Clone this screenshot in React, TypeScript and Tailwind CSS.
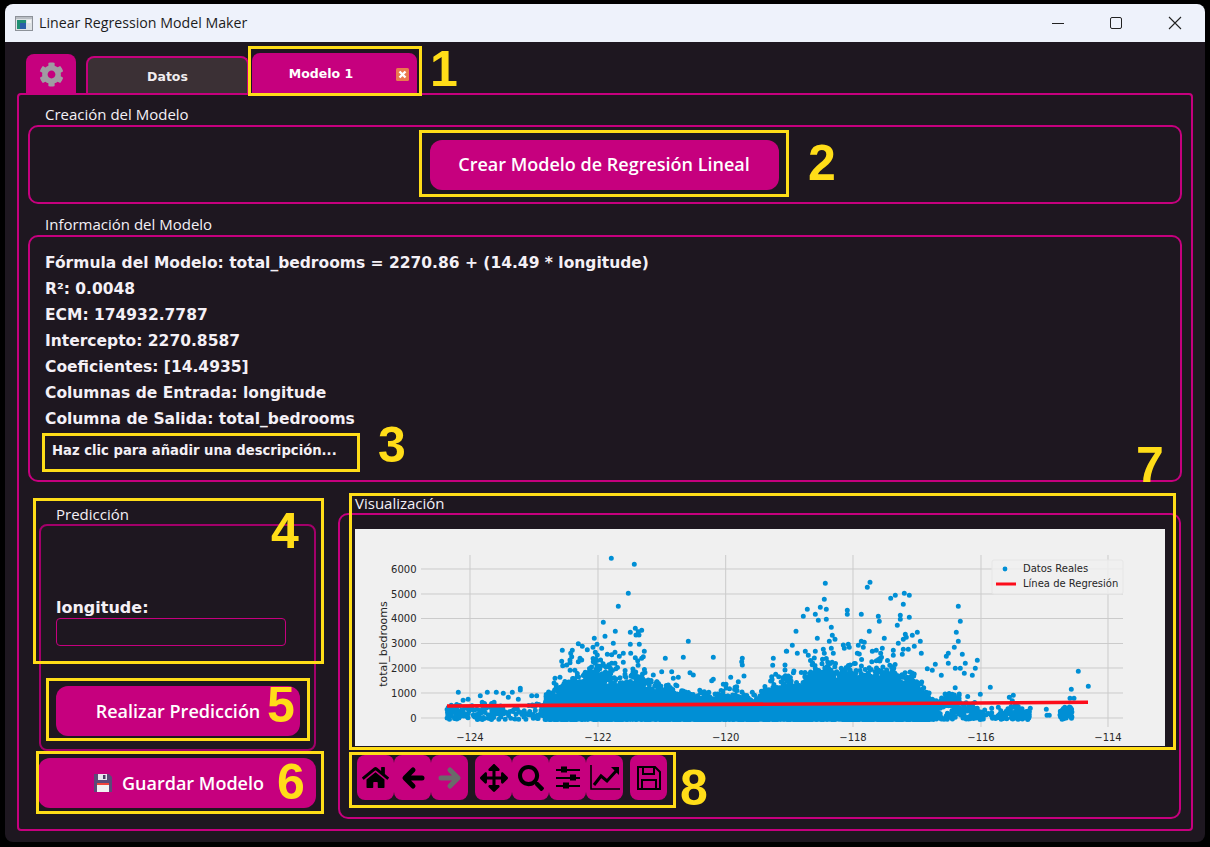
import React from "react";
import { FaHome, FaArrowsAlt, FaSearch, FaCog } from "react-icons/fa";

const OFF_L: [number, number][] = [[814,205],[883,223],[865,310],[835,349],[790,397],[826,424],[871,427],[886,415],[905,421],[895,425],[888,435],[897,435],[795,439],[763,445],[820,460],[871,463],[898,463],[715,461],[727,469],[742,479],[667,481],[697,481],[692,490],[771,463],[759,472],[785,475],[766,487],[772,495],[802,493],[825,487],[815,494],[850,490],[838,499],[872,490],[913,484],[910,500],[886,503],[905,505],[893,512],[1045,454],[1030,502],[976,505],[1120,502],[1207,505],[1205,515],[1207,525],[1300,505],[1298,526],[1340,484],[1335,525],[1335,540],[695,500],[690,510],[720,505],[725,510],[715,515],[665,514],[668,527],[690,518],[680,525],[850,517],[825,520],[815,520],[765,520],[355,607],[421,617],[442,607],[469,607],[490,610],[517,607],[541,595],[541,600],[505,622],[575,617],[590,617],[535,628],[1050,548],[1060,555],[995,545],[965,545],[940,555],[1120,568],[1115,572],[1172,562],[1150,583],[1158,583],[1212,558],[1195,575],[1190,590],[1148,604],[1307,553],[1295,560],[645,565],[660,562],[1000,565],[1015,562],[925,570],[950,575]];
const OFF_R: [number, number][] = [[136,280],[270,277],[262,292],[332,325],[346,316],[373,310],[388,316],[133,328],[121,352],[139,358],[82,358],[70,379],[106,373],[115,391],[139,388],[202,361],[202,373],[244,373],[295,379],[298,394],[361,376],[361,388],[388,382],[352,406],[370,343],[154,412],[48,424],[112,445],[157,436],[148,454],[165,448],[268,424],[313,445],[37,466],[19,484],[52,490],[76,484],[106,484],[85,496],[130,478],[190,465],[205,463],[193,475],[208,472],[154,475],[160,490],[133,490],[355,460],[376,433],[397,436],[412,427],[379,442],[370,448],[421,454],[403,469],[244,454],[253,457],[235,466],[250,472],[277,484],[289,481],[307,475],[302,490],[340,481],[370,478],[385,478],[232,490],[238,492],[301,505],[340,496],[367,493],[424,490],[535,349],[541,394],[529,427],[535,454],[523,472],[505,490],[547,493],[499,499],[592,511],[556,520],[466,523],[442,536],[457,541],[484,556],[526,535],[541,535],[505,520],[577,556],[586,535],[553,550],[631,592],[601,613],[700,616],[688,622],[697,632],[895,544],[925,589],[874,598],[870,625],[882,625],[751,655],[799,658],[801,676],[808,676],[847,667],[859,680],[873,680],[635,655],[655,652],[640,680],[590,680],[610,680],[720,670],[730,673]];

const ENVELOPE: [number, number][] = [[447,706],[460,703],[480,702],[520,706],[545,699],[553,690],[573,677],[597,665],[623,680],[640,673],[657,685],[673,691],[707,697],[733,690],[757,696],[773,680],[787,677],[797,683],[817,667],[847,670],[880,670],[913,675],[927,693],[937,697],[953,687],[970,700],[980,710],[1000,712],[1013,703],[1030,710],[1060,708],[1070,703],[1072,706]];
const DENSITY: [number, number, number, number][] = [[447,505,2.2,1],[505,545,1.2,1],[545,720,26,1.7],[720,790,18,1.7],[790,930,34,1.7],[930,985,3.5,1.1],[985,1000,0.7,1],[1000,1030,3,1],[1060,1072,4,1]];

function topAt(x: number) {
  for (let i = 0; i < ENVELOPE.length - 1; i++) {
    const [a, b] = ENVELOPE[i];
    const [c, d] = ENVELOPE[i + 1];
    if (x >= a && x <= c) return b + ((d - b) * (x - a)) / (c - a);
  }
  return 712;
}

function buildDots() {
  let s = 12345;
  const r = () => {
    s = (s + 0x6d2b79f5) | 0;
    let t = Math.imul(s ^ (s >>> 15), 1 | s);
    t = (t + Math.imul(t ^ (t >>> 7), 61 | t)) ^ t;
    return ((t ^ (t >>> 14)) >>> 0) / 4294967296;
  };
  let d = "";
  for (const [a, b, k, p] of DENSITY) {
    const n = Math.round((b - a) * k);
    for (let i = 0; i < n; i++) {
      const x = a + r() * (b - a);
      const h = (719 - topAt(x)) * (0.8 + 0.5 * Math.pow(r(), 3));
      const y = 719.5 - h * Math.pow(r(), p);
      d += `M${x.toFixed(1)} ${y.toFixed(1)}h0`;
    }
  }
  for (const [zx, zy] of OFF_L) d += `M${(340 + zx / 3).toFixed(1)} ${(490 + zy / 3).toFixed(1)}h0`;
  for (const [zx, zy] of OFF_R) d += `M${(780 + zx / 3).toFixed(1)} ${(490 + zy / 3).toFixed(1)}h0`;
  return d;
}
const DOTS = buildDots();

const XT: [number, string][] = [[470,"−124"],[598,"−122"],[725.7,"−120"],[853,"−118"],[981,"−116"],[1108,"−114"]];
const YT: [number, string][] = [[718,"0"],[693,"1000"],[668,"2000"],[643.5,"3000"],[618.5,"4000"],[594,"5000"],[569,"6000"]];

function Chart() {
  return (
    <svg width="810" height="217" viewBox="355 529 810 217" className="block">
      <rect x="355" y="529" width="810" height="217" fill="#f0f0f0" />
      {XT.map(([x]) => <line key={x} x1={x} x2={x} y1="555" y2="727" stroke="#cbcbcb" strokeWidth="1" />)}
      {YT.map(([y]) => <line key={y} x1="421" x2="1123" y1={y} y2={y} stroke="#cbcbcb" strokeWidth="1" />)}
      <path d={DOTS} stroke="#008fd5" strokeWidth="5" strokeLinecap="round" fill="none" />
      <line x1="447" y1="706" x2="1088" y2="702.3" stroke="#fc0d1b" strokeWidth="3.6" />
      <rect x="992" y="560" width="131" height="34" fill="#f0f0f0" fillOpacity="0.8" stroke="#e6e6e6" rx="2" />
      <circle cx="1005" cy="569" r="2.4" fill="#008fd5" />
      <line x1="996" x2="1016" y1="584" y2="584" stroke="#fc0d1b" strokeWidth="3" />
      <g fontFamily="'DejaVu Sans', sans-serif" fontSize="10" fill="#262626">
        <text x="1023" y="572">Datos Reales</text>
        <text x="1023" y="587">Línea de Regresión</text>
        {XT.map(([x, t]) => <text key={t} x={x} y="741" textAnchor="middle">{t}</text>)}
        {YT.map(([y, t]) => <text key={t} x="416.5" y={y + 3.5} textAnchor="end">{t}</text>)}
        <text transform="translate(386.5 644) rotate(-90)" textAnchor="middle" fontSize="11">total_bedrooms</text>
      </g>
    </svg>
  );
}

function Box({ className }: { className: string }) {
  return <div className={`absolute border-[3px] border-[#ffdd18] pointer-events-none ${className}`} />;
}
function Num({ className, children }: { className: string; children: React.ReactNode }) {
  return <div className={`absolute text-[50px] leading-none font-bold text-[#ffdd18] font-['Liberation_Sans',sans-serif] ${className}`}>{children}</div>;
}

function ToolBtn({ children, className = "" }: { children: React.ReactNode; className?: string }) {
  return <div className={`w-[37px] h-[45px] rounded-[8px] bg-[#c6007e] flex items-center justify-center text-black ${className}`}>{children}</div>;
}

function Arrow({ flip = false, color = "#000" }: { flip?: boolean; color?: string }) {
  return (
    <svg width="24" height="24" viewBox="0 0 24 24" fill="none" stroke={color} strokeWidth="5" strokeLinecap="round" strokeLinejoin="round" style={flip ? { transform: "scaleX(-1)" } : undefined}>
      <path d="M21 12H5M12 4L4 12L12 20" />
    </svg>
  );
}

function Title({ children, className = "" }: { children: React.ReactNode; className?: string }) {
  return <div className={`text-[15px] leading-[20px] text-[#f4f0f6] font-['Open_Sans',sans-serif] ${className}`}>{children}</div>;
}

const ACTION = "rounded-[12px] bg-[#c6007e] flex items-center justify-center text-white font-['Open_Sans',sans-serif] font-semibold text-[18px]";

const INFO = [
  "Fórmula del Modelo: total_bedrooms = 2270.86 + (14.49 * longitude)",
  "R²: 0.0048",
  "ECM: 174932.7787",
  "Intercepto: 2270.8587",
  "Coeficientes: [14.4935]",
  "Columnas de Entrada: longitude",
  "Columna de Salida: total_bedrooms",
];

export default function App() {
  return (
    <div className="relative w-[1210px] h-[847px] bg-black overflow-hidden pt-[4px] px-[5px] pb-[5px]">
      <div className="w-full h-full flex flex-col rounded-t-[8px] rounded-b-[8px] overflow-hidden">
        {/* title bar */}
        <div className="h-[38px] bg-[#eef2fb] flex items-center pl-[10px] shrink-0">
          <svg width="18" height="15" viewBox="0 0 18 15" className="mr-[6px]">
            <rect x="0.5" y="0.5" width="17" height="14" fill="#dfe3e6" stroke="#8d9299" />
            <rect x="1" y="1" width="16" height="2" fill="#b9bec4" />
            <rect x="2" y="4" width="9" height="9" fill="#1f8f73" />
            <rect x="5" y="7" width="6" height="6" fill="#2b5fa8" />
            <rect x="12" y="4" width="4" height="3" fill="#f4f4f4" />
          </svg>
          <span className="text-[14.2px] text-[#1c1c1c] font-['Open_Sans',sans-serif]">Linear Regression Model Maker</span>
          <div className="ml-auto flex items-center h-full">
            <div className="w-[58px] flex justify-center"><div className="w-[12px] h-px bg-[#222]" /></div>
            <div className="w-[58px] flex justify-center"><div className="w-[12px] h-[12px] border border-[#222] rounded-[2px]" /></div>
            <div className="w-[60px] flex justify-center">
              <svg width="14" height="14" viewBox="0 0 14 14"><path d="M1 1L13 13M13 1L1 13" stroke="#222" strokeWidth="1.1" /></svg>
            </div>
          </div>
        </div>

        {/* client area */}
        <div className="flex-1 bg-[#1e1720] flex flex-col pl-[12px] pr-[12px]">
          {/* tabs */}
          <div className="h-[51px] flex items-end shrink-0 pl-[9px]">
            <div className="w-[50px] h-[41px] mb-[-2px] bg-[#c6007e] rounded-t-[8px] flex items-center justify-center">
              <FaCog className="text-[#a09ca2] text-[25px]" />
            </div>
            <div className="ml-[10px] w-[163px] h-[38px] mb-[-1px] bg-[#3b3035] border-2 border-b-0 border-[#c6007e] rounded-t-[8px] flex items-center justify-center pt-[3px] text-[12.5px] font-bold text-[#f0ecef] font-['DejaVu_Sans',sans-serif]">
              Datos
            </div>
            <div className="ml-[3px] w-[165px] h-[41px] mb-[-1px] bg-[#c6007e] rounded-t-[8px] relative flex items-center justify-center pt-[1px] text-[12.5px] font-bold text-white font-['DejaVu_Sans',sans-serif] pr-[27px]">
              Modelo 1
              <svg width="13" height="13" viewBox="0 0 13 13" className="absolute right-[8px] top-[15px]">
                <rect width="13" height="13" rx="1.5" fill="#ea7a4e" />
                <path d="M3.5 3.5L9.5 9.5M9.5 3.5L3.5 9.5" stroke="#fff" strokeWidth="2.4" />
              </svg>
            </div>
          </div>

          {/* main panel */}
          <div className="w-[1176px] h-[738px] border-2 border-[#c6007e] rounded-[4px] px-[9px] pt-[9px] flex flex-col">
            <Title className="pl-[17px] h-[21px]">Creación del Modelo</Title>
            <div className="border-2 border-[#c6007e] rounded-[10px] h-[79px] flex items-center justify-center">
              <div className={`${ACTION} w-[349px] h-[50px] mr-[2px]`}>Crear Modelo de Regresión Lineal</div>
            </div>

            <Title className="pl-[17px] mt-[10px] h-[21px]">Información del Modelo</Title>
            <div className="border-2 border-[#c6007e] rounded-[10px] h-[247px] pl-[15px] pt-[13px] text-[#f4f0f6] font-['DejaVu_Sans',sans-serif] font-bold">
              {INFO.map((l) => <div key={l} className="text-[15.5px] leading-[26px]">{l}</div>)}
              <div className="text-[13.2px] leading-[20px] mt-[9px] pl-[7px]">Haz clic para añadir una descripción...</div>
            </div>

            <div className="flex mt-[11px]">
              {/* left column */}
              <div className="w-[310px] shrink-0 flex flex-col">
                <Title className="h-[31px] pt-[11px] pl-[28px]">Predicción</Title>
                <div className="border-2 border-[#a3006a] rounded-[8px] ml-[11px] w-[277px] h-[227px] pl-[15px] flex flex-col">
                  <div className="mt-[71px] text-[16px] leading-[21px] font-bold text-[#f4f0f6] font-['DejaVu_Sans',sans-serif]">longitude:</div>
                  <div className="w-[230px] h-[28px] border border-[#c6007e] rounded-[4px]" />
                  <div className={`${ACTION} mt-[40px] w-[244px] h-[50px]`}>Realizar Predicción</div>
                </div>
                <div className={`${ACTION} ml-[10px] mt-[7px] w-[278px] h-[50px] gap-[9px] pl-[3px]`}>
                  <svg width="20" height="20" viewBox="0 0 20 20">
                    <path d="M1 1H16L19 4V19H1Z" fill="#5b4a78" />
                    <rect x="5" y="1" width="9" height="6" fill="#e9e6ee" />
                    <rect x="10" y="2" width="2.5" height="4" fill="#4a3b66" />
                    <rect x="4" y="10" width="12" height="9" fill="#f2f2f2" />
                    <rect x="4" y="10" width="12" height="2" fill="#f0443c" />
                  </svg>
                  Guardar Modelo
                </div>
              </div>

              {/* right column */}
              <div className="flex-1 flex flex-col">
                <Title className="pl-[17px] h-[20px]">Visualización</Title>
                <div className="border-2 border-[#c6007e] rounded-[10px] w-[843px] h-[306px] pl-[15px] pt-[14px] flex flex-col">
                  <Chart />
                  <div className="flex mt-[9px] ml-[2px]">
                    <ToolBtn><FaHome size={27} /></ToolBtn>
                    <ToolBtn><Arrow /></ToolBtn>
                    <ToolBtn><Arrow flip color="#6a6a6a" /></ToolBtn>
                    <ToolBtn className="ml-[7px]"><FaArrowsAlt size={28} /></ToolBtn>
                    <ToolBtn>
                      <FaSearch size={26} />
                    </ToolBtn>
                    <ToolBtn>
                      <svg width="26" height="24" viewBox="0 0 26 24" fill="none" stroke="#000" strokeWidth="2">
                        <path d="M1 4H25M1 12H25M1 20H25" />
                        <rect x="6" y="0.5" width="6" height="6" fill="#000" stroke="none" />
                        <rect x="15" y="8.5" width="6" height="6" fill="#000" stroke="none" />
                        <rect x="8" y="16.5" width="6" height="6" fill="#000" stroke="none" />
                      </svg>
                    </ToolBtn>
                    <ToolBtn>
                      <svg width="30" height="26" viewBox="0 0 30 26" fill="none" stroke="#000">
                        <path d="M1 0V24H30" strokeWidth="1.6" />
                        <path d="M4 20L11 11L17 16L27 5" strokeWidth="3" />
                        <path d="M21 2H29V10Z" fill="#000" stroke="none" />
                      </svg>
                    </ToolBtn>
                    <ToolBtn className="ml-[7px]">
                      <svg width="24" height="24" viewBox="0 0 24 24" fill="none" stroke="#000" strokeWidth="2">
                        <path d="M1 1H18L23 6V23H1Z" />
                        <path d="M6 1V8H17V1M5 23V14H19V23" />
                      </svg>
                    </ToolBtn>
                  </div>
                </div>
              </div>
            </div>
          </div>
        </div>
      </div>

      {/* annotations */}
      <Box className="left-[248px] top-[46px] w-[174px] h-[50px]" />
      <Box className="left-[419px] top-[130px] w-[370px] h-[67px]" />
      <Box className="left-[42px] top-[433px] w-[318px] h-[39px]" />
      <Box className="left-[33px] top-[498px] w-[291px] h-[166px]" />
      <Box className="left-[46px] top-[678px] w-[264px] h-[63px]" />
      <Box className="left-[36px] top-[751px] w-[288px] h-[63px]" />
      <Box className="left-[349px] top-[493px] w-[827px] h-[257px]" />
      <Box className="left-[349px] top-[752px] w-[327px] h-[56px]" />
      <Num className="left-[430px] top-[44px]">1</Num>
      <Num className="left-[808px] top-[138px]">2</Num>
      <Num className="left-[378px] top-[420px]">3</Num>
      <Num className="left-[271px] top-[506px]">4</Num>
      <Num className="left-[267px] top-[680px]">5</Num>
      <Num className="left-[277px] top-[757px]">6</Num>
      <Num className="left-[1136px] top-[440px]">7</Num>
      <Num className="left-[680px] top-[763px]">8</Num>
    </div>
  );
}
